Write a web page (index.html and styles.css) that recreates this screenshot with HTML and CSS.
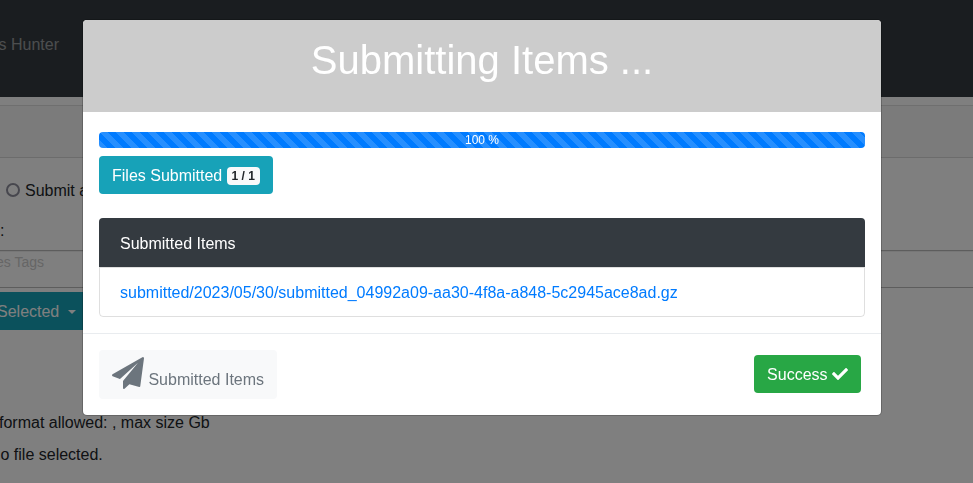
FILE: index.html
```html
<!DOCTYPE html>
<html lang="en">
<head>
<meta charset="utf-8">
<title>Submit Items</title>
<link rel="stylesheet" href="styles.css">
</head>
<body>
<div class="page">
  <nav class="navbar"><span class="nav-link">s Hunter</span></nav>
  <main class="card">
    <div class="card-header"></div>
    <div class="radio-row"><span class="radio"></span><span>Submit a</span></div>
    <div class="label-row">:</div>
    <div class="tag-input">es Tags</div>
    <div class="dropdown">Selected<span class="caret"></span></div>
    <p class="format">format allowed: , max size Gb</p>
    <p class="file">o file selected.</p>
  </main>
</div>
<div class="backdrop">
  <section class="modal" role="dialog">
    <header class="modal-header"><h1>Submitting Items ...</h1></header>
    <div class="modal-body">
      <div class="progress">100 %</div>
      <button class="btn btn-info">Files Submitted <span class="badge">1 / 1</span></button>
      <ul class="list">
        <li class="list-title">Submitted Items</li>
        <li><a href="#">submitted/2023/05/30/submitted_04992a09-aa30-4f8a-a848-5c2945ace8ad.gz</a></li>
      </ul>
    </div>
    <footer class="modal-footer">
      <button class="btn btn-light"><svg class="plane" viewBox="0 0 512 512"><path fill="currentColor" d="M502 2q11 5 10 18l-60 449q-2 14-16 11l-158-43-78 70q-20 12-24-10V390q0-9 6-15L416 92 132 346q-7 6-16 3L10 306q-10-5-10-15 0-9 8-14L486 3q9-4 16-1z"/></svg> Submitted Items</button>
      <button class="btn btn-success">Success <svg class="check" viewBox="0 0 512 512"><path fill="currentColor" d="M173.898 439.404l-166.400-166.400c-9.997-9.997-9.997-26.206 0-36.204l36.203-36.204c9.997-9.998 26.207-9.998 36.204 0L192 312.690 432.095 72.596c9.997-9.997 26.207-9.997 36.204 0l36.203 36.204c9.997 9.997 9.997 26.206 0 36.204l-294.400 294.401c-9.998 9.997-26.207 9.997-36.204-.001z"/></svg></button>
    </footer>
  </section>
</div>
</body>
</html>
```
FILE: styles.css
```css
* { box-sizing: border-box; }
body {
  margin: 0;
  font: 16px/24px "Liberation Sans", Arial, sans-serif;
  color: #212529;
  background: #fff;
}
h1, p, ul { margin: 0; padding: 0; font-weight: 400; }
.page { height: 483px; overflow: hidden; white-space: nowrap; }
.navbar {
  height: 97px;
  padding-top: 33px;
  background: #343a40;
  color: rgba(255, 255, 255, .5);
  text-indent: -1.500px;
}
.card { margin-top: 8px; border-top: 1px solid rgba(0, 0, 0, .125); }
.card-header {
  height: 52px;
  background: rgba(0, 0, 0, .03);
  border-bottom: 1px solid rgba(0, 0, 0, .125);
}
.radio-row {
  display: flex;
  align-items: center;
  gap: 5px;
  margin-top: 21px;
  padding-left: 6px;
}
.radio {
  width: 14px;
  height: 14px;
  margin-top: -2px;
  border: 2px solid #8f8f9d;
  border-radius: 50%;
}
.label-row { margin-top: 16px; }
.tag-input {
  height: 38px;
  margin-top: 7px;
  border: solid #bbb;
  border-width: 1px 0;
  box-shadow: inset 0 1px 1px rgba(0, 0, 0, .075);
  color: #ccc;
  font-size: 14px;
  line-height: 22px;
  text-indent: -4px;
}
.dropdown {
  display: flex;
  align-items: center;
  gap: 9px;
  width: 100px;
  height: 38px;
  margin-top: 4px;
  padding-top: 2px;
  background: #17a2b8;
  color: #fff;
  text-indent: -3px;
}
.caret {
  border: solid transparent;
  border-width: 4px 4px 0;
  border-top-color: #fff;
}
.format { margin-top: 81px; text-indent: -1px; }
.file { margin-top: 8px; text-indent: .5px; }
.backdrop {
  position: fixed;
  inset: 0;
  padding: 19px 0 0 82px;
  background: rgba(0, 0, 0, .5);
}
.modal {
  width: 800px;
  height: 397px;
  border: 1px solid rgba(0, 0, 0, .2);
  border-radius: 5px;
  background: #fff;
  background-clip: padding-box;
}
.modal-header {
  height: 92px;
  padding-top: 16px;
  border-radius: 4px 4px 0 0;
  background: #ccc;
  color: #fff;
  text-align: center;
}
.modal-header h1 { font-size: 40px; line-height: 48px; }
.modal-body { padding: 20px 16px 16px; }
.progress {
  height: 16px;
  border-radius: 4px;
  background: linear-gradient(45deg, rgba(255, 255, 255, .15) 25%, transparent 25%, transparent 50%, rgba(255, 255, 255, .15) 50%, rgba(255, 255, 255, .15) 75%, transparent 75%, transparent) 0 0 / 16px 16px #007bff;
  color: #fff;
  font-size: 12px;
  line-height: 16px;
  text-align: center;
}
.btn {
  display: block;
  padding: 6px 12px;
  border: 1px solid transparent;
  border-radius: 4px;
  font: inherit;
  white-space: nowrap;
}
.btn-info {
  margin-top: 8px;
  padding: 7px 12px 5px;
  background: #17a2b8;
  color: #fff;
}
.badge {
  display: inline-block;
  padding: 3px 4.800px;
  border-radius: 4px;
  background: #f8f9fa;
  color: #212529;
  font-size: 12px;
  font-weight: 700;
  line-height: 12px;
  vertical-align: 1px;
}
.list {
  margin-top: 24px;
  border: 1px solid rgba(0, 0, 0, .125);
  border-radius: 4px;
  list-style: none;
}
.list li { height: 48px; padding: 13px 20px 11px; }
.list .list-title {
  margin: -1px -1px 0;
  padding: 14px 21px 11px;
  border-bottom: 1px solid #dfdfdf;
  border-radius: 4px 4px 0 0;
  height: 50px;
  background: #343a40;
  background-clip: padding-box;
  color: #fff;
}
.list a { color: #007bff; text-decoration: none; }
.modal-footer {
  display: flex;
  justify-content: space-between;
  align-items: flex-start;
  padding: 16px 20px 16px 16px;
  border-top: 1px solid #e9ecef;
}
.btn-light { height: 49px; background: #f8f9fa; color: #6c757d; }
.btn-success {
  margin-top: 5px;
  padding: 7px 12px 5px;
  background: #28a745;
  color: #fff;
}
.plane { width: 32px; height: 32px; vertical-align: -4px; }
.check { width: 16px; height: 16px; vertical-align: -2px; }
```
